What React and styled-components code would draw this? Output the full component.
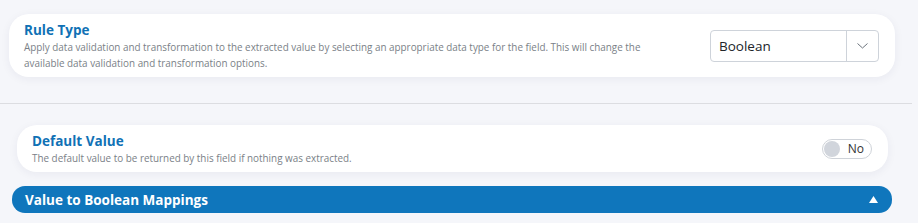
import React from 'react'
import styled, { createGlobalStyle } from 'styled-components'

const GlobalStyle = createGlobalStyle`
  body {
    margin: 0;
    background: #f5f6fa;
    font-family: "Open Sans", "Noto Sans", sans-serif;
  }
`

const Page = styled.div`
  width: 912px;
  padding-top: 14px;
`

const Card = styled.div`
  display: flex;
  align-items: center;
  justify-content: space-between;
  background: #fff;
  border-radius: 20px;
  box-shadow: 0 2px 10px rgba(30, 40, 80, 0.06);
  margin: ${p => p.$margin};
  padding: ${p => p.$padding};
  height: ${p => p.$height}px;
  box-sizing: border-box;
`

const Info = styled.div`
  display: flex;
  flex-direction: column;
  max-width: 630px;
`

const Title = styled.div`
  color: #1071b5;
  font-weight: 700;
  font-size: 13.5px;
  line-height: 18px;
`

const Desc = styled.div`
  color: #7a7f87;
  font-size: 9.9px;
  line-height: 16px;
`

const Select = styled.div`
  display: flex;
  width: 169px;
  height: 32px;
  border: 1px solid #ced3da;
  border-radius: 4px;
  box-sizing: border-box;
`

const SelectValue = styled.div`
  flex: 1;
  display: flex;
  align-items: center;
  padding-left: 8px;
  font-size: 13.5px;
  color: #212529;
`

const SelectButton = styled.div`
  width: 31px;
  display: flex;
  align-items: center;
  justify-content: center;
  border-left: 1px solid #ced3da;
`

const Divider = styled.hr`
  border: none;
  border-top: 1px solid #dcdde1;
  margin: 26px 0 21px;
`

const Toggle = styled.div`
  display: flex;
  align-items: center;
  justify-content: space-between;
  width: 50px;
  height: 20px;
  border: 1px solid #cfd3d9;
  border-radius: 10px;
  box-sizing: border-box;
  padding: 0 7px 0 1px;
`

const Knob = styled.span`
  width: 16px;
  height: 16px;
  border-radius: 50%;
  background: #d1d5dc;
`

const ToggleLabel = styled.span`
  font-size: 12px;
  color: #333;
`

const Bar = styled.div`
  display: flex;
  align-items: center;
  justify-content: space-between;
  height: 27px;
  margin: 14px 20px 0 12px;
  padding: 0 14px 0 13px;
  background: #0f76bc;
  border-radius: 13px;
  color: #fff;
  font-weight: 700;
  font-size: 13.5px;
`

const Chevron = () => (
  <svg width="11" height="6" viewBox="0 0 11 6">
    <path d="M0.5 0.5 L5.5 5 L10.5 0.5" fill="none" stroke="#6c747d" strokeWidth="1" />
  </svg>
)

const Caret = () => (
  <svg width="9" height="7" viewBox="0 0 9 7">
    <path d="M4.5 0 L9 7 L0 7 Z" fill="#fff" />
  </svg>
)

export default function App() {
  return (
    <Page>
      <GlobalStyle />
      <Card $margin="0 17px 0 9px" $padding="0 16px 0 15px" $height={63}>
        <Info>
          <Title>Rule Type</Title>
          <Desc>
            Apply data validation and transformation to the extracted value by selecting an appropriate data type for the field. This will change the available data validation and transformation options.
          </Desc>
        </Info>
        <Select>
          <SelectValue>Boolean</SelectValue>
          <SelectButton><Chevron /></SelectButton>
        </Select>
      </Card>
      <Divider />
      <Card $margin="0 24px 0 17px" $padding="0 16px 0 15px" $height={47}>
        <Info>
          <Title>Default Value</Title>
          <Desc>The default value to be returned by this field if nothing was extracted.</Desc>
        </Info>
        <Toggle>
          <Knob />
          <ToggleLabel>No</ToggleLabel>
        </Toggle>
      </Card>
      <Bar>
        <span>Value to Boolean Mappings</span>
        <Caret />
      </Bar>
    </Page>
  )
}
